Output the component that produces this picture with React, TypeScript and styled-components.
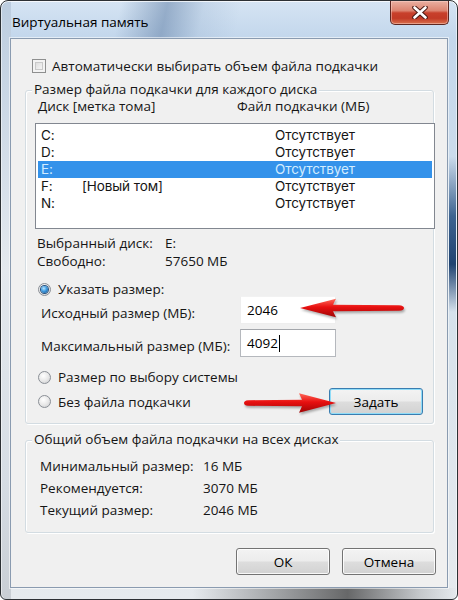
import React from "react";
import styled, { createGlobalStyle } from "styled-components";

const GlobalStyle = createGlobalStyle`
  html, body { margin: 0; padding: 0; background: #ffffff; }
  * { box-sizing: border-box; }
  #root { width: 458px; height: 600px; }
`;

const Window = styled.div`
  width: 458px;
  height: 600px;
  border: 1px solid #2c3034;
  border-radius: 8px 8px 6px 6px;
  padding: 0 9px 11px;
  display: flex;
  flex-direction: column;
  overflow: hidden;
  font-family: "Open Sans", "Noto Sans", sans-serif;
  font-size: 13.5px;
  color: #151515;
  box-shadow: inset 0 1px 0 rgba(255, 255, 255, 0.75), inset 1px 0 0 rgba(255, 255, 255, 0.5),
    inset -1px 0 0 rgba(255, 255, 255, 0.5);
  background:
    linear-gradient(180deg, rgba(40, 80, 130, 0) 26%, rgba(36, 78, 128, 0.85) 36%, rgba(22, 58, 106, 0.95) 44%, rgba(40, 80, 130, 0) 52%) right 1px top 0 / 7px 100% no-repeat,
    linear-gradient(90deg, rgba(70, 70, 70, 0) 42%, rgba(60, 60, 60, 0.75) 76%, rgba(70, 70, 70, 0.2) 92%, rgba(70, 70, 70, 0) 100%) left bottom / 100% 11px no-repeat,
    linear-gradient(102deg, rgba(110, 140, 175, 0) 26%, rgba(100, 130, 168, 0.55) 36%, rgba(150, 175, 205, 0.25) 44%, rgba(200, 220, 240, 0) 52%) left top / 100% 38px no-repeat,
    linear-gradient(180deg, #bccde0 0%, #e4e9ee 45%, #d6dde4 80%, #c9ced4 100%) left top / 10px 100% no-repeat,
    linear-gradient(180deg, #d5e4f3 0%, #c3d7ec 36px, #d9e3ec 60%, #e6eaee 100%);
`;

const TitleBar = styled.div`
  height: 37px;
  flex: none;
  display: flex;
  justify-content: space-between;
  align-items: flex-start;
  padding-left: 2px;
  margin-right: -1px;
`;

const Title = styled.div`
  margin-top: 12px;
  line-height: 18px;
  color: #000;
`;

const CloseButton = styled.div`
  width: 59px;
  height: 24px;
  border: 1px solid #5c2620;
  border-top: none;
  border-radius: 0 0 5px 5px;
  background: linear-gradient(180deg, #eab0a2 0%, #dc8470 42%, #c8402b 52%, #c23a26 75%, #d9704c 100%);
  box-shadow: inset 0 0 0 1px rgba(255, 220, 210, 0.45);
  display: flex;
  align-items: center;
  justify-content: center;
`;

const Client = styled.div`
  flex: 1;
  border: 1px solid #8a9bb0;
  background: #f0f0f0;
  padding: 0 13px 0 14px;
  display: flex;
  flex-direction: column;
  box-shadow: 0 0 0 1px rgba(255, 255, 255, 0.55);
`;

const CheckRow = styled.div`
  display: flex;
  align-items: center;
  gap: 6px;
  height: 18px;
  line-height: 18px;
  margin: 18px 0 0 7px;
`;

const CheckBox = styled.div`
  width: 14px;
  height: 14px;
  border: 1px solid #8e8f8f;
  background: linear-gradient(135deg, #d2d2d2 0%, #eeeeee 60%, #f8f8f8 100%);
  box-shadow: inset 0 0 0 2px #f3f3f3, inset 0 0 0 3px #c9c9c9;
`;

const GroupBox = styled.div<{ $mt: number; $pb: number }>`
  position: relative;
  display: flex;
  flex-direction: column;
  margin-top: ${(p) => p.$mt}px;
  padding-bottom: ${(p) => p.$pb}px;
  border: 1px solid #d3dce2;
  border-radius: 3px;
  box-shadow: inset 1px 1px 0 #ffffff, 1px 1px 0 #ffffff;
`;

const Legend = styled.div`
  align-self: flex-start;
  margin: -11px 0 0 6px;
  padding: 0 2px;
  height: 18px;
  line-height: 18px;
  background: #f0f0f0;
`;

const Header = styled.div`
  display: grid;
  grid-template-columns: 199px 1fr;
  padding-left: 12px;
  height: 17px;
  line-height: 17px;
`;

const ListBox = styled.div`
  margin: 8px 0 0 9px;
  width: 400px;
  height: 106px;
  border: 1px solid #828790;
  background: #ffffff;
  padding: 3px 2px;
`;

const ListRow = styled.div<{ $selected?: boolean }>`
  display: grid;
  grid-template-columns: 41px 193px 1fr;
  height: 17px;
  line-height: 17px;
  padding-left: 3px;
  font-family: Inter, "Open Sans", sans-serif;
  font-size: 13.5px;
  letter-spacing: -0.1px;
  background: ${(p) => (p.$selected ? "#3492ea" : "transparent")};
  color: ${(p) => (p.$selected ? "#d2ecff" : "#151515")};
`;

const InfoGrid = styled.div<{ $mt: number; $pl: number; $col: number; $rh: number }>`
  display: grid;
  grid-template-columns: ${(p) => p.$col}px 1fr;
  grid-auto-rows: ${(p) => p.$rh}px;
  align-items: center;
  margin-top: ${(p) => p.$mt}px;
  padding-left: ${(p) => p.$pl}px;
  line-height: 18px;
`;

const RadioRow = styled.div<{ $mt: number; $h: number }>`
  display: flex;
  align-items: center;
  justify-content: space-between;
  margin-top: ${(p) => p.$mt}px;
  height: ${(p) => p.$h}px;
  padding: 0 10px 0 12px;
`;

const RadioLabel = styled.div`
  display: flex;
  align-items: center;
  gap: 7px;
  line-height: 18px;
`;

const RadioCircle = styled.div`
  width: 13px;
  height: 13px;
  border-radius: 50%;
  border: 1px solid #8a8f96;
  background: radial-gradient(circle at 40% 35%, #ffffff 0%, #e9e9e9 50%, #c9cbce 100%);
  display: flex;
  align-items: center;
  justify-content: center;
`;

const RadioDot = styled.div`
  width: 7px;
  height: 7px;
  border-radius: 50%;
  background: radial-gradient(circle at 40% 35%, #b9e6ff 0%, #3f9ae0 45%, #0b4e8c 100%);
  box-shadow: 0 0 0 1px #28507c;
`;

const SizeGrid = styled.div`
  display: grid;
  grid-template-columns: 199px 96px;
  row-gap: 5px;
  margin-top: -2px;
  padding-left: 15px;
`;

const SizeLabel = styled.div`
  align-self: center;
  padding-top: 5px;
  line-height: 18px;
`;

const TextInput = styled.div<{ $faint?: boolean }>`
  height: 28px;
  background: #ffffff;
  border: 1px solid ${(p) => (p.$faint ? "#eeeeee" : "#b5b8bd")};
  border-top-color: ${(p) => (p.$faint ? "#f2f2f2" : "#a3a6ab")};
  padding-left: 6px;
  display: flex;
  align-items: center;
  color: #000;
`;

const Caret = styled.span`
  display: inline-block;
  width: 1px;
  height: 17px;
  margin-left: 1px;
  background: #000;
`;

const Button = styled.button<{ $default?: boolean }>`
  width: 94px;
  height: 27px;
  padding: 0;
  font-family: inherit;
  font-size: 13.5px;
  color: #000;
  border: 1px solid ${(p) => (p.$default ? "#3a7db0" : "#737373")};
  border-radius: 3px;
  background: linear-gradient(180deg, #f3f3f3 0%, #ececec 48%, #dddddd 52%, #d2d2d2 100%);
  box-shadow: inset 0 0 0 1px ${(p) => (p.$default ? "#8fdcf8" : "rgba(255,255,255,0.85)")};
  display: flex;
  align-items: center;
  justify-content: center;
`;

const ButtonRow = styled.div`
  display: flex;
  justify-content: flex-end;
  gap: 12px;
  margin: 15px -2px 0 0;
`;

const ArrowSvg = styled.svg<{ $left: number; $top: number }>`
  position: absolute;
  left: ${(p) => p.$left}px;
  top: ${(p) => p.$top}px;
  overflow: visible;
  filter: drop-shadow(1px 2px 1px rgba(0, 0, 0, 0.3));
`;

function Radio({ checked }: { checked?: boolean }) {
  return <RadioCircle>{checked && <RadioDot />}</RadioCircle>;
}

function CloseIcon() {
  return (
    <svg width="16" height="13" viewBox="0 0 16 13">
      <path
        d="M2.5 1.5 L13.5 11.5 M13.5 1.5 L2.5 11.5"
        stroke="#4a1a14"
        strokeWidth="4.6"
        strokeLinecap="round"
        fill="none"
      />
      <path
        d="M2.5 1.5 L13.5 11.5 M13.5 1.5 L2.5 11.5"
        stroke="#ffffff"
        strokeWidth="2.6"
        strokeLinecap="round"
        fill="none"
      />
    </svg>
  );
}

function RedGradient({ id }: { id: string }) {
  return (
    <defs>
      <linearGradient id={id} x1="0" y1="0" x2="0" y2="1">
        <stop offset="0" stopColor="#ff6a5a" />
        <stop offset="0.45" stopColor="#e81010" />
        <stop offset="1" stopColor="#a00505" />
      </linearGradient>
    </defs>
  );
}

function ArrowLeft() {
  return (
    <ArrowSvg $left={272} $top={207} width="110" height="20" viewBox="0 0 110 20">
      <RedGradient id="redA" />
      <path
        d="M2 10 L38 0.8 L35 6.8 L101 7.2 Q106 7.6 106 10 Q106 12.4 101 12.8 L35 13.2 L38 19.2 Z"
        fill="url(#redA)"
      />
    </ArrowSvg>
  );
}

function ArrowRight() {
  return (
    <ArrowSvg $left={217} $top={301} width="96" height="22" viewBox="0 0 96 22">
      <RedGradient id="redB" />
      <path
        d="M93 11 L56 1.2 L59 7.8 L5 8.2 Q1 8.6 1 11 Q1 13.4 5 13.8 L59 14.2 L56 20.8 Z"
        fill="url(#redB)"
      />
    </ArrowSvg>
  );
}

const drives = [
  { d: "C:", label: "", size: "Отсутствует" },
  { d: "D:", label: "", size: "Отсутствует" },
  { d: "E:", label: "", size: "Отсутствует", selected: true },
  { d: "F:", label: "[Новый том]", size: "Отсутствует" },
  { d: "N:", label: "", size: "Отсутствует" },
];

export default function App() {
  return (
    <>
      <GlobalStyle />
      <Window>
        <TitleBar>
          <Title>Виртуальная память</Title>
          <CloseButton>
            <CloseIcon />
          </CloseButton>
        </TitleBar>
        <Client>
          <CheckRow>
            <CheckBox />
            <span>Автоматически выбирать объем файла подкачки</span>
          </CheckRow>

          <GroupBox $mt={15} $pb={8}>
            <Legend>Размер файла подкачки для каждого диска</Legend>
            <Header>
              <span>Диск [метка тома]</span>
              <span>Файл подкачки (МБ)</span>
            </Header>
            <ListBox>
              {drives.map((r) => (
                <ListRow key={r.d} $selected={r.selected}>
                  <span>{r.d}</span>
                  <span>{r.label}</span>
                  <span>{r.size}</span>
                </ListRow>
              ))}
            </ListBox>
            <InfoGrid $mt={5} $pl={11} $col={128} $rh={18}>
              <span>Выбранный диск:</span>
              <span>E:</span>
              <span>Свободно:</span>
              <span>57650 МБ</span>
            </InfoGrid>
            <RadioRow $mt={10} $h={18}>
              <RadioLabel>
                <Radio checked />
                <span>Указать размер:</span>
              </RadioLabel>
            </RadioRow>
            <SizeGrid>
              <SizeLabel>Исходный размер (МБ):</SizeLabel>
              <TextInput $faint>2046</TextInput>
              <SizeLabel>Максимальный размер (МБ):</SizeLabel>
              <TextInput>
                4092
                <Caret />
              </TextInput>
            </SizeGrid>
            <RadioRow $mt={11} $h={18}>
              <RadioLabel>
                <Radio />
                <span>Размер по выбору системы</span>
              </RadioLabel>
            </RadioRow>
            <RadioRow $mt={2} $h={27}>
              <RadioLabel>
                <Radio />
                <span>Без файла подкачки</span>
              </RadioLabel>
              <Button $default>Задать</Button>
            </RadioRow>
            <ArrowLeft />
            <ArrowRight />
          </GroupBox>

          <GroupBox $mt={16} $pb={11}>
            <Legend>Общий объем файла подкачки на всех дисках</Legend>
            <InfoGrid $mt={7} $pl={14} $col={163} $rh={22}>
              <span>Минимальный размер:</span>
              <span>16 МБ</span>
              <span>Рекомендуется:</span>
              <span>3070 МБ</span>
              <span>Текущий размер:</span>
              <span>2046 МБ</span>
            </InfoGrid>
          </GroupBox>

          <ButtonRow>
            <Button>ОК</Button>
            <Button>Отмена</Button>
          </ButtonRow>
        </Client>
      </Window>
    </>
  );
}
